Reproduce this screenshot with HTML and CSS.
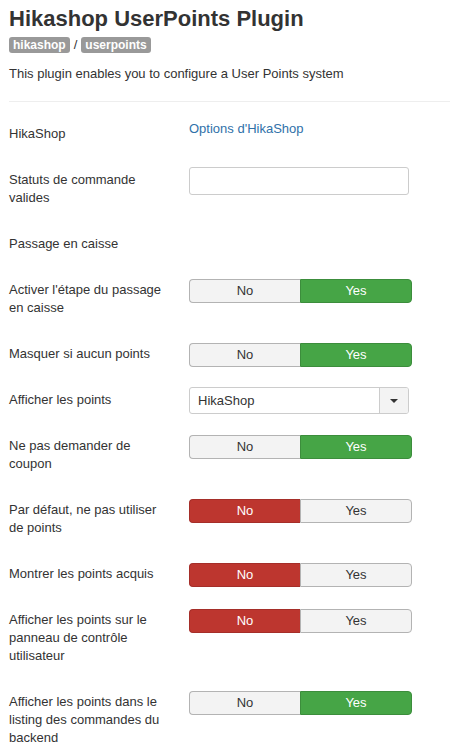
FILE: index.html
```html
<!DOCTYPE html>
<html>
<head>
<meta charset="utf-8">
<link rel="stylesheet" href="styles.css">
</head>
<body>
<div class="page">
  <h1 class="title">Hikashop UserPoints Plugin</h1>
  <div class="tags"><span class="badge">hikashop</span><span class="sep">/</span><span class="badge">userpoints</span></div>
  <p class="desc">This plugin enables you to configure a User Points system</p>
  <hr class="rule">

  <div class="group">
    <div class="label">HikaShop</div>
    <div class="control"><a class="link" href="#">Options d'HikaShop</a></div>
  </div>
  <div class="group">
    <div class="label">Statuts de commande valides</div>
    <div class="control"><div class="input"></div></div>
  </div>
  <div class="group">
    <div class="label">Passage en caisse</div>
    <div class="control"></div>
  </div>
  <div class="group">
    <div class="label">Activer l'étape du passage en caisse</div>
    <div class="control"><div class="toggle"><span class="opt">No</span><span class="opt yes">Yes</span></div></div>
  </div>
  <div class="group">
    <div class="label">Masquer si aucun points</div>
    <div class="control"><div class="toggle"><span class="opt">No</span><span class="opt yes">Yes</span></div></div>
  </div>
  <div class="group">
    <div class="label">Afficher les points</div>
    <div class="control"><div class="select"><span class="select-val">HikaShop</span><span class="select-btn"><span class="caret"></span></span></div></div>
  </div>
  <div class="group">
    <div class="label">Ne pas demander de coupon</div>
    <div class="control"><div class="toggle"><span class="opt">No</span><span class="opt yes">Yes</span></div></div>
  </div>
  <div class="group">
    <div class="label">Par défaut, ne pas utiliser de points</div>
    <div class="control"><div class="toggle"><span class="opt no">No</span><span class="opt">Yes</span></div></div>
  </div>
  <div class="group">
    <div class="label">Montrer les points acquis</div>
    <div class="control"><div class="toggle"><span class="opt no">No</span><span class="opt">Yes</span></div></div>
  </div>
  <div class="group">
    <div class="label">Afficher les points sur le panneau de contrôle utilisateur</div>
    <div class="control"><div class="toggle"><span class="opt no">No</span><span class="opt">Yes</span></div></div>
  </div>
  <div class="group">
    <div class="label">Afficher les points dans le listing des commandes du backend</div>
    <div class="control"><div class="toggle"><span class="opt">No</span><span class="opt yes">Yes</span></div></div>
  </div>
</div>
</body>
</html>
```

FILE: styles.css
```css
html, body {
  margin: 0;
  padding: 0;
  background: #fff;
}
body {
  font-family: "Liberation Sans", Arial, sans-serif;
  font-size: 13px;
  line-height: 18px;
  color: #333;
}
.page {
  padding: 5px 0 0 9px;
  width: 441px;
}
.title {
  margin: 0;
  font-size: 22px;
  line-height: 28px;
  font-weight: bold;
  color: #333;
}
.tags {
  display: flex;
  align-items: center;
  margin-top: 4px;
  height: 16px;
}
.badge {
  display: inline-block;
  background: #999;
  color: #fff;
  font-weight: bold;
  font-size: 12px;
  line-height: 16px;
  padding: 0 4px;
  border-radius: 3px;
}
.sep {
  margin: 0 4px 0 4px;
  color: #333;
}
.desc {
  margin: 12px 0 0 0;
}
.rule {
  border: 0;
  border-top: 1px solid #eee;
  margin: 18px 0 18px 0;
  width: 441px;
}
.group {
  display: flex;
  align-items: flex-start;
  margin-bottom: 18px;
}
.label {
  width: 160px;
  padding: 5px 20px 5px 0;
  line-height: 18px;
}
.control {
  flex: 0 0 auto;
}
.link {
  color: #3071a9;
  text-decoration: none;
  line-height: 18px;
}
.input {
  box-sizing: border-box;
  width: 220px;
  height: 28px;
  margin-top: 1px;
  border: 1px solid #ccc;
  border-radius: 3px;
  background: #fff;
}
.toggle {
  display: flex;
  width: 223px;
  height: 24px;
  margin-top: 3px;
  box-sizing: border-box;
}
.opt {
  flex: 1 1 0;
  box-sizing: border-box;
  height: 24px;
  line-height: 22px;
  text-align: center;
  background: #f3f3f3;
  border: 1px solid #b3b3b3;
  color: #333;
}
.opt:first-child {
  border-radius: 4px 0 0 4px;
  border-right: 0;
}
.opt:last-child {
  border-radius: 0 4px 4px 0;
}
.opt.yes {
  background: #46a546;
  border-color: #3c8d3c;
  color: #fff;
}
.opt.no {
  background: #bd362f;
  border-color: #a52e29;
  color: #fff;
}
.select {
  display: flex;
  box-sizing: border-box;
  width: 220px;
  height: 27px;
  margin-top: 1px;
  border: 1px solid #ccc;
  border-radius: 3px;
  background: #fff;
  overflow: hidden;
}
.select-val {
  flex: 1 1 auto;
  padding-left: 8px;
  line-height: 25px;
}
.select-btn {
  flex: 0 0 28px;
  display: flex;
  align-items: center;
  justify-content: center;
  border-left: 1px solid #ccc;
  background: #f3f3f3;
}
.caret {
  width: 0;
  height: 0;
  border-left: 4px solid transparent;
  border-right: 4px solid transparent;
  border-top: 4px solid #333;
}
```
